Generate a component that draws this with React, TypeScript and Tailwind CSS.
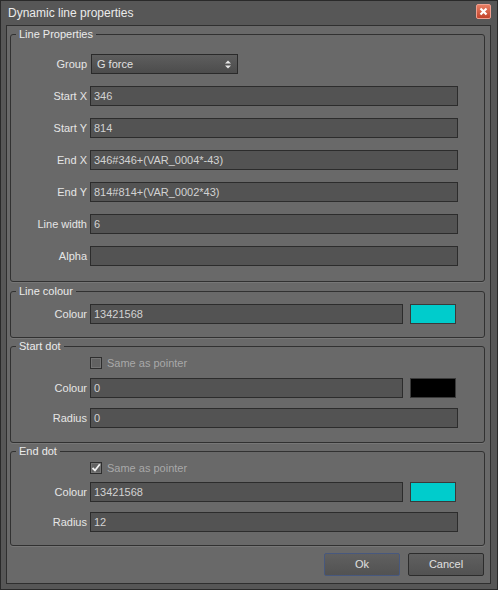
import React from 'react'

const font = "font-['Liberation_Sans',Arial,sans-serif]"

function Input({ value, w = 'w-[368px]' }: { value: string; w?: string }) {
  return (
    <div className={`${w} h-[20px] bg-[#535353] border border-[#2c2c2c] flex items-center px-[3px] text-[11px] text-[#d2d2d2]`}>
      {value}
    </div>
  )
}

function Row({ label, children, className = '' }: { label: string; children: React.ReactNode; className?: string }) {
  return (
    <div className={`flex items-center h-[20px] ${className}`}>
      <div className="w-[76px] text-right text-[11px] text-[#e6e6e6] pr-[0px]">{label}</div>
      <div className="ml-[3px] flex items-center">{children}</div>
    </div>
  )
}

function Swatch({ color }: { color: string }) {
  return <div className={`ml-[7px] w-[46px] h-[20px] border border-[#3a3a3a] ${color}`} />
}

function Check({ checked, className = '' }: { checked?: boolean; className?: string }) {
  return (
    <div className={`flex items-center h-[12px] pl-[79px] ${className}`}>
      <div className="w-[12px] h-[12px] bg-[#626262] border border-[#2e2e2e] shadow-[inset_0_0_0_1px_#747474] flex items-center justify-center">
        {checked && (
          <svg width="10" height="10" viewBox="0 0 10 10">
            <path d="M1.5 5 L4 7.5 L8.8 1.2" fill="none" stroke="#f2f2f2" strokeWidth="1.8" />
          </svg>
        )}
      </div>
      <span className="ml-[5px] text-[11px] text-[#a8a8a8]">Same as pointer</span>
    </div>
  )
}

function Group({ title, className = '', children }: { title: string; className?: string; children: React.ReactNode }) {
  return (
    <fieldset className={`border border-[#313131] rounded-[3px] w-[475px] shadow-[0_1px_0_#777] ${className}`}>
      <legend className="ml-[5px] px-[3px] text-[11px] leading-[13px] text-[#ececec]">{title}</legend>
      {children}
    </fieldset>
  )
}

export default function App() {
  return (
    <div className={`${font} w-[498px] h-[590px] bg-[#575757] border border-[#2a2a2a] flex flex-col`}>
      <div className="h-[24px] flex items-center justify-between pl-[7px] pr-[6px]">
        <span className="text-[12px] text-[#ebebeb]">Dynamic line properties</span>
        <div className="w-[15px] h-[15px] mt-[-4px] rounded-[2px] border border-[#f0a090] bg-gradient-to-b from-[#e77e63] to-[#c2432b] flex items-center justify-center">
          <svg width="9" height="9" viewBox="0 0 9 9">
            <path d="M1.5 1.5 L7.5 7.5 M7.5 1.5 L1.5 7.5" stroke="#ffffff" strokeWidth="2.2" />
          </svg>
        </div>
      </div>

      <div className="ml-[5px] w-[485px] h-[559px] border border-[#2f2f2f] bg-[#696969] pl-[3px] pr-[5px] pt-[2px] flex flex-col">
        <Group title="Line Properties" className="pb-[15px]">
          <div className="flex flex-col gap-[12px] pt-[13px]">
            <Row label="Group">
              <div className="ml-[1px] w-[147px] h-[20px] border border-[#2a2a2a] bg-gradient-to-b from-[#5e5e5e] to-[#4c4c4c] flex items-center justify-between pl-[5px] pr-[6px] text-[11px] text-[#e0e0e0]">
                <span>G force</span>
                <svg width="6" height="9" viewBox="0 0 6 9">
                  <path d="M0 3.5 L3 0.5 L6 3.5 Z M0 5.5 L3 8.5 L6 5.5 Z" fill="#e8e8e8" />
                </svg>
              </div>
            </Row>
            <Row label="Start X"><Input value="346" /></Row>
            <Row label="Start Y"><Input value="814" /></Row>
            <Row label="End X"><Input value="346#346+(VAR_0004*-43)" /></Row>
            <Row label="End Y"><Input value="814#814+(VAR_0002*43)" /></Row>
            <Row label="Line width"><Input value="6" /></Row>
            <Row label="Alpha"><Input value="" /></Row>
          </div>
        </Group>

        <Group title="Line colour" className="mt-[3px] pb-[13px]">
          <div className="pt-[6px]">
            <Row label="Colour">
              <Input value="13421568" w="w-[313px]" />
              <Swatch color="bg-[#00cccc]" />
            </Row>
          </div>
        </Group>

        <Group title="Start dot" className="mt-[2px] pb-[14px]">
          <Check className="mt-[4px]" />
          <Row label="Colour" className="mt-[9px]">
            <Input value="0" w="w-[313px]" />
            <Swatch color="bg-black" />
          </Row>
          <Row label="Radius" className="mt-[10px]"><Input value="0" /></Row>
        </Group>

        <Group title="End dot" className="mt-[2px] pb-[13px]">
          <Check checked className="mt-[4px]" />
          <Row label="Colour" className="mt-[8px]">
            <Input value="13421568" w="w-[313px]" />
            <Swatch color="bg-[#00cccc]" />
          </Row>
          <Row label="Radius" className="mt-[10px]"><Input value="12" /></Row>
        </Group>

        <div className="w-[475px] flex justify-end gap-[8px] pr-[1px] mt-[7px]">
          <div className="w-[76px] h-[23px] rounded-[2px] border border-[#47587e] bg-gradient-to-b from-[#606060] to-[#525252] flex items-center justify-center text-[11px] text-[#e0e0e0]">Ok</div>
          <div className="w-[76px] h-[23px] rounded-[2px] border border-[#2c2c2c] bg-gradient-to-b from-[#606060] to-[#525252] flex items-center justify-center text-[11px] text-[#e0e0e0]">Cancel</div>
        </div>
      </div>
    </div>
  )
}
